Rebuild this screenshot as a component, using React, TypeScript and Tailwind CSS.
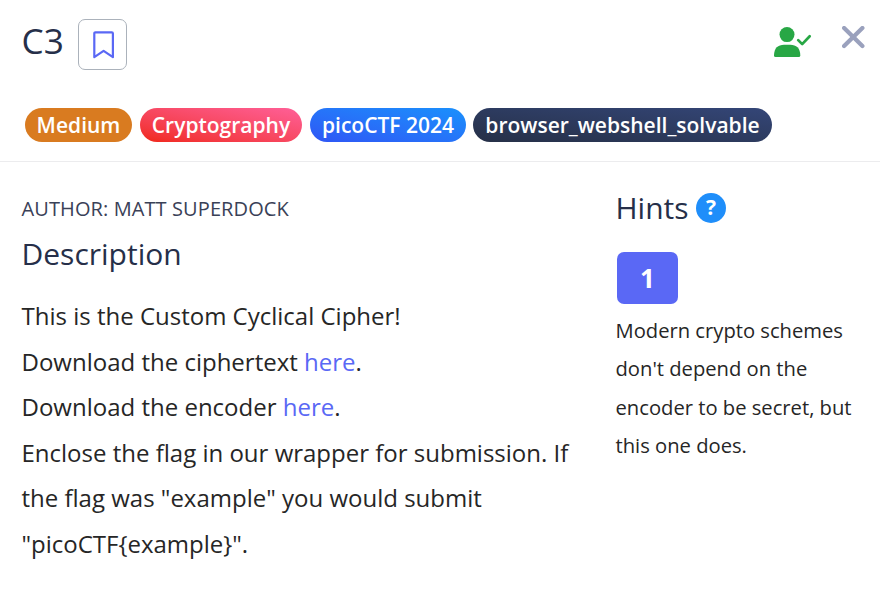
const tags = [
  { label: "Medium", style: "w-[107px] bg-[#d97b20]" },
  { label: "Cryptography", style: "w-[162px] bg-linear-to-tr from-[#f02613] to-[#ff5f98]" },
  { label: "picoCTF 2024", style: "w-[156px] bg-linear-to-tr from-[#2f55f5] to-[#1a90fc]" },
  { label: "browser_webshell_solvable", style: "w-[299px] bg-linear-to-tr from-[#263047] to-[#344678]" },
];

export default function App() {
  return (
    <div className="h-[590px] w-[880px] overflow-hidden bg-white font-['Open_Sans',sans-serif] text-[#262626]">
      <header className="h-[162px] border-b border-[#ececee]">
        <div className="flex h-[108px] items-start pl-[21.5px] pr-[15px] text-[#262f49]">
          <h1 className="mt-[13px] w-[56.5px] text-[35.2px] leading-[54px]">C3</h1>
          <button aria-label="Bookmark" className="mt-[19px] flex h-[51px] w-[49px] items-center justify-center rounded-[7px] border border-[#abb2bb]">
            <svg className="ml-[2px]" width="22" height="28" viewBox="0 0 22 28" fill="none" stroke="#5a68f5" strokeWidth="2.2" strokeLinejoin="round">
              <path d="M1.3 26.2V2.4Q1.3 1.3 2.4 1.3H18.8Q19.9 1.3 19.9 2.4V26.2L10.6 19.8Z" />
            </svg>
          </button>
          <svg className="mt-[24px] ml-auto" width="38" height="36" viewBox="0 0 38 36" fill="none">
            <circle cx="13" cy="10.6" r="7.5" fill="#28a745" />
            <path d="M0 31.5C0 24.2 4.1 20.8 10 20.8H16.3C22.2 20.8 26.3 24.2 26.3 31.5Q26.3 33.1 24.7 33.1H1.6Q0 33.1 0 31.5Z" fill="#28a745" />
            <path d="M24.2 16.1L28.2 20.1L35.7 12.3" stroke="#28a745" strokeWidth="2.7" strokeLinecap="round" strokeLinejoin="round" />
          </svg>
          <svg className="mt-[26px] ml-[30px]" width="23" height="23" viewBox="0 0 23 23" stroke="#9aa1bd" strokeWidth="4.2" strokeLinecap="round">
            <path d="M2.1 2L20.4 20.1M20.4 2L2.1 20.1" />
          </svg>
        </div>
        <div className="flex gap-2 pl-[25px]">
          {tags.map((t) => (
            <span key={t.label} className={`flex h-[34px] items-center justify-center rounded-full pt-[2px] text-[21px] font-semibold whitespace-nowrap text-white last:-ml-px ${t.style}`}>{t.label}</span>
          ))}
        </div>
      </header>
      <main className="flex pl-[21.5px]">
        <section className="w-[594px] pt-[31px]">
          <h2 className="text-[20px] leading-[32px] tracking-[0.1px] text-[#3a4157]">AUTHOR: MATT SUPERDOCK</h2>
          <h3 className="mt-[9px] text-[30px] leading-[40px] text-[#262f49]">Description</h3>
          <div className="mt-[19px] text-[24px] leading-[45.6px]">
            <p>This is the Custom Cyclical Cipher!</p>
            <p>Download the ciphertext <a className="text-[#5a68f5]">here</a>.</p>
            <p>Download the encoder <a className="text-[#5a68f5]">here</a>.</p>
            <p>Enclose the flag in our wrapper for submission. If<br />the flag was "example" you would submit<br />"picoCTF{"{"}example{"}"}".</p>
          </div>
        </section>
        <aside className="pt-[26px]">
          <div className="flex h-[40px] items-center gap-[7.5px] text-[#262f49]">
            <h2 className="text-[30px] leading-[40px]">Hints</h2>
            <span className="flex h-[30px] w-[30px] items-center justify-center rounded-full bg-[#1f8efa] text-[21px] font-bold text-white">?</span>
          </div>
          <button className="mt-[24px] ml-[1.5px] flex h-[52px] w-[61px] items-center justify-center rounded-[7px] bg-[#5a68f5] text-[26px] font-bold text-white">1</button>
          <p className="mt-[7px] text-[20.2px] leading-[38.4px] whitespace-nowrap">Modern crypto schemes<br />don't depend on the<br />encoder to be secret, but<br />this one does.</p>
        </aside>
      </main>
    </div>
  );
}
